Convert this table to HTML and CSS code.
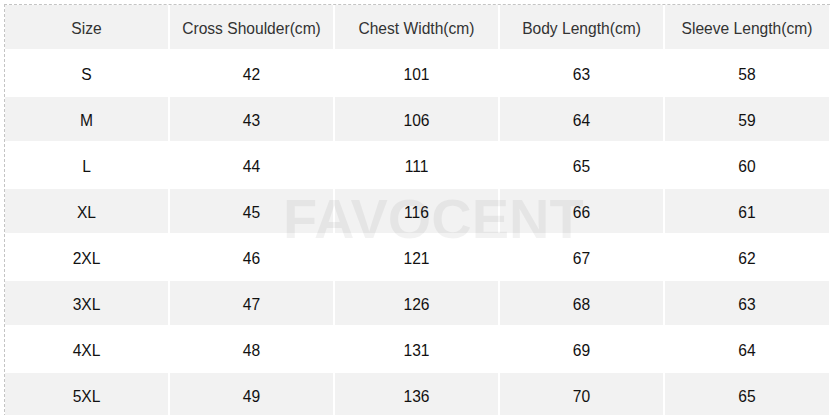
FILE: index.html
```html
<!DOCTYPE html>
<html>
<head>
<meta charset="utf-8">
<link rel="stylesheet" href="styles.css">
</head>
<body>
<div class="wrap">
  <div class="watermark">FAVOCENT</div>
  <div class="table">
    <div class="row alt head"><div class="cell">Size</div><div class="cell">Cross Shoulder(cm)</div><div class="cell">Chest Width(cm)</div><div class="cell">Body Length(cm)</div><div class="cell">Sleeve Length(cm)</div></div>
    <div class="row"><div class="cell">S</div><div class="cell">42</div><div class="cell">101</div><div class="cell">63</div><div class="cell">58</div></div>
    <div class="row alt"><div class="cell">M</div><div class="cell">43</div><div class="cell">106</div><div class="cell">64</div><div class="cell">59</div></div>
    <div class="row"><div class="cell">L</div><div class="cell">44</div><div class="cell">111</div><div class="cell">65</div><div class="cell">60</div></div>
    <div class="row alt"><div class="cell">XL</div><div class="cell">45</div><div class="cell">116</div><div class="cell">66</div><div class="cell">61</div></div>
    <div class="row"><div class="cell">2XL</div><div class="cell">46</div><div class="cell">121</div><div class="cell">67</div><div class="cell">62</div></div>
    <div class="row alt"><div class="cell">3XL</div><div class="cell">47</div><div class="cell">126</div><div class="cell">68</div><div class="cell">63</div></div>
    <div class="row"><div class="cell">4XL</div><div class="cell">48</div><div class="cell">131</div><div class="cell">69</div><div class="cell">64</div></div>
    <div class="row alt"><div class="cell">5XL</div><div class="cell">49</div><div class="cell">136</div><div class="cell">70</div><div class="cell">65</div></div>
  </div>
</div>
</body>
</html>
```
FILE: styles.css
```css
html, body {
  margin: 0;
  padding: 0;
  background: #fff;
}
body {
  font-family: "Liberation Sans", Arial, sans-serif;
  font-size: 15.6px;
  color: #111;
  overflow: hidden;
}
.wrap {
  position: relative;
  margin: 4px 0 0 4px;
  width: 826px;
}
.table {
  position: relative;
  border-top: 1px dashed #c4c4c4;
  border-left: 1px dashed #c4c4c4;
  display: flex;
  flex-direction: column;
  gap: 2px;
}
.row {
  display: grid;
  grid-template-columns: 163px 163px 163px 163px 164px;
  column-gap: 2px;
  height: 44px;
}
.cell {
  display: flex;
  align-items: center;
  justify-content: center;
  padding-top: 3px;
}
.alt .cell {
  background: #f2f2f2;
}
.head .cell {
  color: #333;
}
.watermark {
  position: absolute;
  left: 279px;
  top: 182px;
  font-weight: bold;
  font-size: 56px;
  color: rgba(0, 0, 0, 0.05);
  pointer-events: none;
  z-index: 2;
}
```
